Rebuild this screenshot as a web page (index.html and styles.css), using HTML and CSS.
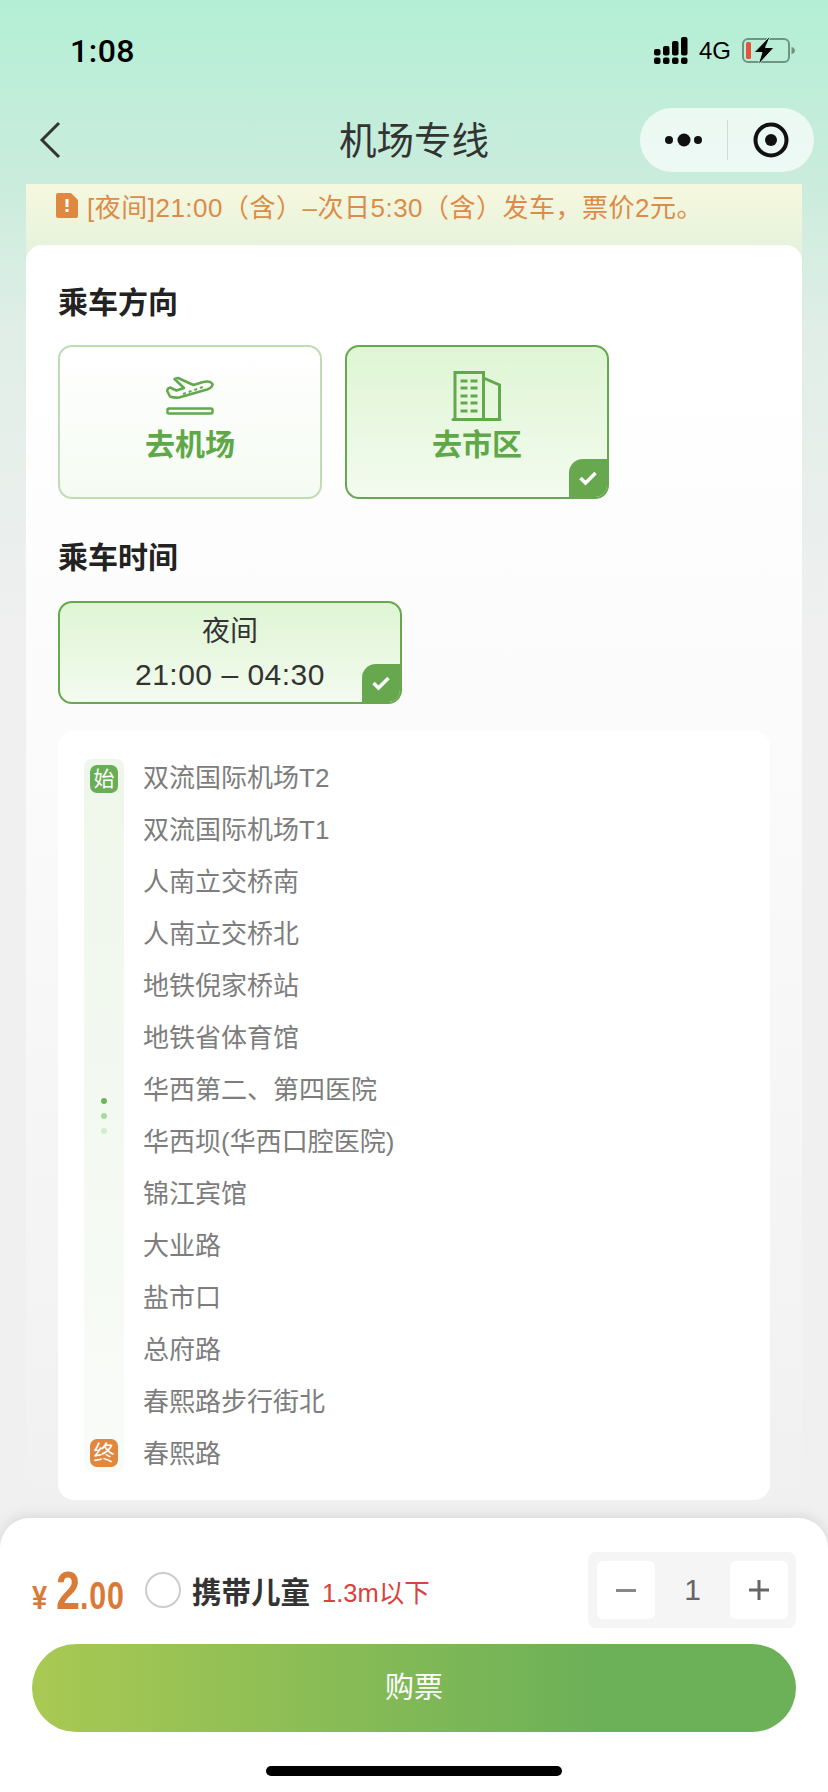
FILE: index.html
```html
<!DOCTYPE html>
<html lang="zh-CN">
<head>
    <meta charset="UTF-8">
    <meta name="viewport" content="width=device-width, initial-scale=1.0">
    <title>机场专线</title>
    <link rel="stylesheet" href="styles.css">
</head>
<body>
    <div class="page">
        <div class="status-bar">
            <span class="status-time">1:08</span>
            <div class="status-right">
                <svg class="signal" width="34" height="27" viewBox="0 0 34 27">
                    <g fill="#000">
                        <rect x="0" y="12" width="6.500" height="6.500" rx="2"/>
                        <rect x="9" y="9" width="6.500" height="9.500" rx="2"/>
                        <rect x="18" y="4" width="6.500" height="14.500" rx="2"/>
                        <rect x="27" y="0" width="6.500" height="18.500" rx="2"/>
                        <rect x="0" y="20.500" width="6.500" height="6.500" rx="2"/>
                        <rect x="9" y="20.500" width="6.500" height="6.500" rx="2"/>
                        <rect x="18" y="20.500" width="6.500" height="6.500" rx="2"/>
                        <rect x="27" y="20.500" width="6.500" height="6.500" rx="2"/>
                    </g>
                </svg>
                <span class="status-net">4G</span>
                <svg class="battery" width="54" height="28" viewBox="0 0 54 28">
                    <rect x="1" y="2" width="46" height="23" rx="5" fill="none" stroke="#6f9484" stroke-width="2"/>
                    <rect x="4" y="5" width="5" height="17" rx="1.500" fill="#e5533d"/>
                    <path d="M49.500 10c2.500.5 3.500 2 3.500 3.500s-1 3-3.500 3.500z" fill="#6f9484"/>
                    <path d="M27 0 L12 15.500 H20 L16 28 L32 10.500 H23.500 L28 0z" fill="#000" stroke="#b6eed6" stroke-width="1"/>
                </svg>
            </div>
        </div>

        <div class="nav-bar">
            <svg class="nav-back" width="24" height="40" viewBox="0 0 24 40">
                <path d="M21 3 L4 20 L21 37" fill="none" stroke="#333" stroke-width="3"/>
            </svg>
            <span class="nav-title">机场专线</span>
            <div class="capsule">
                <svg width="44" height="16" viewBox="0 0 44 16">
                    <circle cx="6" cy="8" r="4" fill="#111"/>
                    <circle cx="21" cy="8" r="6.500" fill="#111"/>
                    <circle cx="35" cy="8" r="4" fill="#111"/>
                </svg>
                <span class="capsule-line"></span>
                <svg width="38" height="38" viewBox="0 0 38 38">
                    <circle cx="19" cy="19" r="15.500" fill="none" stroke="#111" stroke-width="4"/>
                    <circle cx="19" cy="19" r="6" fill="#111"/>
                </svg>
            </div>
        </div>

        <div class="notice">
            <svg class="notice-icon" width="22" height="25" viewBox="0 0 22 25">
                <path d="M2 0 H15 L22 7 V23 a2 2 0 0 1 -2 2 H2 a2 2 0 0 1 -2 -2 V2 a2 2 0 0 1 2 -2z" fill="#e0883f"/>
                <rect x="9.500" y="6" width="3" height="8" fill="#fff"/>
                <rect x="9.500" y="16" width="3" height="3" fill="#fff"/>
            </svg>
            <span>[夜间]21:00（含）–次日5:30（含）发车，票价2元。</span>
        </div>

        <div class="main-card">
            <h2 class="section-title">乘车方向</h2>
            <div class="direction-row">
                <div class="direction-item">
                    <svg class="direction-icon" width="52" height="50" viewBox="0 0 52 50">
                        <g fill="none" stroke="#62a94c" stroke-width="2.500" stroke-linejoin="round">
                            <path d="M3.200 20 L6 25.500 Q10.500 27 15 26.500 L43 18.500 C47.500 17 49.500 14 48 12.500 C46 10 41 10.500 37.500 11.500 L29.500 14 L14 7 L10.500 8 L20 17 L12.500 19.500 L6 16.500 L4 17.500z"/>
                            <rect x="3.500" y="37.500" width="45" height="5" rx="1.500"/>
                        </g>
                        <path d="M19 23 L39 16" stroke="#62a94c" stroke-width="2" stroke-dasharray="3 3"/>
                    </svg>
                    <span class="direction-label">去机场</span>
                </div>
                <div class="direction-item is-active">
                    <svg class="direction-icon" width="52" height="50" viewBox="0 0 52 50">
                        <g fill="none" stroke="#62a94c" stroke-width="3">
                            <path d="M4 48 V1.500 H32.500 V48"/>
                            <path d="M32.500 7 L48.500 14 V48"/>
                        </g>
                        <rect x="0.500" y="47" width="50" height="3" rx="1.500" fill="#62a94c"/>
                        <g stroke="#62a94c" stroke-width="3" stroke-dasharray="7 3">
                            <path d="M9.500 10 H26.500"/>
                            <path d="M9.500 17 H26.500"/>
                            <path d="M9.500 25 H26.500"/>
                            <path d="M9.500 32 H26.500"/>
                            <path d="M9.500 40 H26.500"/>
                        </g>
                    </svg>
                    <span class="direction-label">去市区</span>
                    <span class="check-corner">
                        <svg width="20" height="16" viewBox="0 0 20 16"><path d="M2.500 8 L7.500 13 L17.500 3" fill="none" stroke="#fff" stroke-width="3.500"/></svg>
                    </span>
                </div>
            </div>

            <h2 class="section-title section-title-time">乘车时间</h2>
            <div class="time-item">
                <span class="time-name">夜间</span>
                <span class="time-range">21:00 – 04:30</span>
                <span class="check-corner">
                    <svg width="20" height="16" viewBox="0 0 20 16"><path d="M2.500 8 L7.500 13 L17.500 3" fill="none" stroke="#fff" stroke-width="3.500"/></svg>
                </span>
            </div>

            <div class="stops">
                <div class="stops-rail">
                    <span class="rail-badge">始</span>
                    <div class="rail-dots">
                        <i class="dot dot-1"></i>
                        <i class="dot dot-2"></i>
                        <i class="dot dot-3"></i>
                    </div>
                    <span class="rail-badge rail-badge-end">终</span>
                </div>
                <ul class="stops-list">
                    <li>双流国际机场T2</li>
                    <li>双流国际机场T1</li>
                    <li>人南立交桥南</li>
                    <li>人南立交桥北</li>
                    <li>地铁倪家桥站</li>
                    <li>地铁省体育馆</li>
                    <li>华西第二、第四医院</li>
                    <li>华西坝(华西口腔医院)</li>
                    <li>锦江宾馆</li>
                    <li>大业路</li>
                    <li>盐市口</li>
                    <li>总府路</li>
                    <li>春熙路步行街北</li>
                    <li>春熙路</li>
                </ul>
            </div>
        </div>

        <div class="bottom-sheet">
            <div class="order-row">
                <div class="price">
                    <span class="price-sign">¥</span><span class="price-int">2</span><span class="price-dec">.00</span>
                </div>
                <span class="radio"></span>
                <span class="child-label">携带儿童</span>
                <span class="child-note">1.3m以下</span>
                <div class="stepper">
                    <span class="stepper-btn">
                        <svg width="20" height="3" viewBox="0 0 20 3"><rect width="20" height="3" fill="#888"/></svg>
                    </span>
                    <span class="stepper-value">1</span>
                    <span class="stepper-btn">
                        <svg width="20" height="20" viewBox="0 0 20 20"><path d="M0 10 H20 M10 0 V20" stroke="#666" stroke-width="3"/></svg>
                    </span>
                </div>
            </div>
            <div class="buy-btn">购票</div>
            <div class="home-bar"></div>
        </div>
    </div>
</body>
</html>
```

FILE: styles.css
```css
* {
    box-sizing: border-box;
}
html, body {
    margin: 0;
    padding: 0;
}
body {
    font-family: "Liberation Sans", "Noto Sans CJK SC", sans-serif;
    background-color: #f0f0f0;
}
.page {
    position: relative;
    width: 828px;
    height: 1792px;
    overflow: hidden;
    background: linear-gradient(180deg, #b3efd5 0%, #c9ecdc 170px, #e0eee7 330px, #f0f0f0 640px);
}

/* status bar */
.status-bar {
    height: 108px;
    padding: 37px 32px 0 70px;
    display: flex;
    justify-content: space-between;
    align-items: flex-start;
}
.status-time {
    font-family: Roboto, sans-serif;
    font-size: 32px;
    line-height: 28px;
    font-weight: 500;
    letter-spacing: 0.5px;
    color: #000;
}
.status-right {
    display: flex;
    align-items: flex-start;
}
.status-net {
    margin: 0 11px 0 11px;
    font-size: 24px;
    line-height: 28px;
    color: #000;
}

/* nav */
.nav-bar {
    height: 76px;
    padding: 0 14px 12px 38px;
    display: flex;
    align-items: center;
    justify-content: space-between;
    position: relative;
}
.nav-title {
    position: absolute;
    left: 0;
    right: 0;
    top: 11px;
    text-align: center;
    font-size: 37.500px;
    line-height: 44px;
    color: #333;
}
.capsule {
    width: 174px;
    height: 64px;
    border-radius: 32px;
    background-color: rgba(255, 255, 255, 0.68);
    display: flex;
    align-items: center;
    padding-left: 23px;
}
.capsule-line {
    width: 1px;
    height: 40px;
    margin: 0 24px 0 20px;
    background-color: #cfdcd6;
}

/* notice */
.notice {
    margin: 0 26px;
    height: 80px;
    padding: 8px 30px 0;
    display: flex;
    align-items: flex-start;
    font-size: 26px;
    line-height: 32px;
    letter-spacing: 0.5px;
    color: #dc8c48;
    background: linear-gradient(180deg, #f6f8de 0%, #e3f1dc 100%);
    white-space: nowrap;
}
.notice-icon {
    margin: 1px 9px 0 0;
    flex: none;
}

/* main card */
.main-card {
    margin: -19px 26px 0;
    height: 1400px;
    padding: 0 32px;
    position: relative;
    border-radius: 16px 16px 0 0;
    background: linear-gradient(180deg, #fff 0%, #fff 120px, #fbfbfb 480px, #f0f0f0 1280px);
}
.section-title {
    margin: 0;
    padding-top: 40px;
    font-size: 30px;
    line-height: 36px;
    font-weight: 600;
    color: #222;
}
.section-title-time {
    padding-top: 41px;
}
.direction-row {
    margin-top: 24px;
    display: flex;
    gap: 23px;
}
.direction-item {
    position: relative;
    width: 264px;
    height: 154px;
    border: 2px solid #bfdcb6;
    border-radius: 14px;
    background: linear-gradient(180deg, #fff 0%, #f5fbf2 100%);
    overflow: hidden;
    display: flex;
    flex-direction: column;
    align-items: center;
    padding-top: 24px;
}
.direction-item.is-active {
    border-color: #67a84f;
    background: linear-gradient(180deg, #dff5d4 0%, #f3fbef 100%);
}
.direction-icon {
    flex: none;
}
.direction-label {
    margin-top: 4px;
    font-size: 30px;
    line-height: 40px;
    font-weight: 600;
    color: #5fa848;
}
.check-corner {
    position: absolute;
    right: 0;
    bottom: 0;
    width: 38px;
    height: 38px;
    border-radius: 14px 0 0 0;
    background-color: #67a84f;
    display: flex;
    align-items: center;
    justify-content: center;
}
.time-item {
    position: relative;
    margin-top: 25px;
    width: 344px;
    height: 103px;
    border: 2px solid #67a84f;
    border-radius: 14px;
    background: linear-gradient(180deg, #dff5d4 0%, #f3fbef 100%);
    overflow: hidden;
    display: flex;
    flex-direction: column;
    align-items: center;
    color: #333;
}
.time-name {
    margin-top: 10px;
    font-size: 28px;
    line-height: 38px;
}
.time-range {
    margin-top: 5px;
    font-size: 30px;
    line-height: 38px;
    letter-spacing: 0.5px;
}

/* stops */
.stops {
    margin-top: 27px;
    width: 712px;
    height: 769px;
    padding: 28px 26px;
    border-radius: 16px;
    background-color: #fff;
    display: flex;
}
.stops-rail {
    flex: none;
    width: 40px;
    height: 713px;
    padding: 6px 0 5px;
    border-radius: 8px;
    background: linear-gradient(180deg, #eef7ea 0%, #f9fbf8 100%);
    display: flex;
    flex-direction: column;
    align-items: center;
    justify-content: space-between;
}
.rail-badge {
    width: 28px;
    height: 28px;
    border-radius: 7px;
    background-color: #69ae56;
    color: #fff;
    font-size: 21px;
    line-height: 28px;
    text-align: center;
}
.rail-badge-end {
    background-color: #e0883f;
}
.rail-dots {
    display: flex;
    flex-direction: column;
    gap: 9px;
}
.dot {
    display: block;
    width: 6px;
    height: 6px;
    border-radius: 50%;
}
.dot-1 {
    background-color: #6eb65a;
}
.dot-2 {
    background-color: #a9d8a0;
}
.dot-3 {
    background-color: #d4edd0;
}
.stops-list {
    list-style: none;
    margin: -7px 0 0 19px;
    padding: 0;
    font-size: 26px;
    line-height: 52px;
    color: #7d7d7d;
}

/* bottom */
.bottom-sheet {
    position: absolute;
    left: 0;
    right: 0;
    top: 1518px;
    bottom: 0;
    padding: 34px 32px 0;
    border-radius: 30px 30px 0 0;
    background-color: #fff;
    box-shadow: 0 -2px 14px rgba(0, 0, 0, 0.1);
}
.order-row {
    height: 76px;
    display: flex;
    align-items: center;
}
.price {
    width: 113px;
    color: #d97a36;
    font-weight: 700;
    white-space: nowrap;
    transform: scaleX(0.8);
    transform-origin: left center;
}
.price-sign {
    font-size: 34px;
    margin-right: 11px;
}
.price-int {
    font-size: 54px;
}
.price-dec {
    font-size: 38px;
    letter-spacing: 1px;
}
.radio {
    flex: none;
    width: 36px;
    height: 36px;
    margin-left: 0;
    border: 2px solid #ccc;
    border-radius: 50%;
}
.child-label {
    margin-left: 11px;
    font-size: 29.500px;
    font-weight: 600;
    color: #333;
}
.child-note {
    margin-left: 12px;
    font-size: 25.500px;
    color: #d9423f;
}
.stepper {
    margin-left: auto;
    width: 208px;
    height: 76px;
    padding: 9px 8px 9px 9px;
    border-radius: 8px;
    background-color: #f5f5f5;
    display: flex;
    align-items: center;
    justify-content: space-between;
}
.stepper-btn {
    width: 58px;
    height: 58px;
    border-radius: 6px;
    background-color: #fff;
    display: flex;
    align-items: center;
    justify-content: center;
}
.stepper-value {
    font-size: 30px;
    color: #666;
}
.buy-btn {
    margin-top: 16px;
    height: 88px;
    border-radius: 44px;
    background: linear-gradient(90deg, #a9c953 0%, #6cb058 75%);
    color: #fff;
    font-size: 29px;
    line-height: 88px;
    text-align: center;
}
.home-bar {
    width: 296px;
    height: 10px;
    margin: 34px auto 0;
    border-radius: 5px;
    background-color: #000;
}
```
